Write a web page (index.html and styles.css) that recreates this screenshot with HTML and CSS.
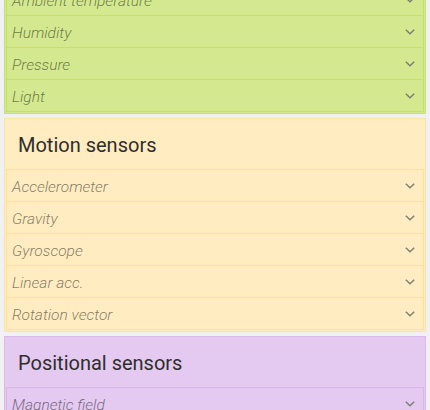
FILE: index.html
```html
<!DOCTYPE html>
<html>
<head>
<meta charset="utf-8">
<link rel="stylesheet" href="styles.css">
</head>
<body>
<main class="list">
  <section class="card card--env">
    <ul class="rows">
      <li class="row"><span>Ambient temperature</span><svg class="chev" viewBox="0 0 10 6"><path d="M0.8 0.8 L5 4.8 L9.2 0.8"/></svg></li>
      <li class="row"><span>Humidity</span><svg class="chev" viewBox="0 0 10 6"><path d="M0.8 0.8 L5 4.8 L9.2 0.8"/></svg></li>
      <li class="row"><span>Pressure</span><svg class="chev" viewBox="0 0 10 6"><path d="M0.8 0.8 L5 4.8 L9.2 0.8"/></svg></li>
      <li class="row"><span>Light</span><svg class="chev" viewBox="0 0 10 6"><path d="M0.8 0.8 L5 4.8 L9.2 0.8"/></svg></li>
    </ul>
  </section>
  <section class="card card--motion">
    <h2 class="card__title">Motion sensors</h2>
    <ul class="rows">
      <li class="row"><span>Accelerometer</span><svg class="chev" viewBox="0 0 10 6"><path d="M0.8 0.8 L5 4.8 L9.2 0.8"/></svg></li>
      <li class="row"><span>Gravity</span><svg class="chev" viewBox="0 0 10 6"><path d="M0.8 0.8 L5 4.8 L9.2 0.8"/></svg></li>
      <li class="row"><span>Gyroscope</span><svg class="chev" viewBox="0 0 10 6"><path d="M0.8 0.8 L5 4.8 L9.2 0.8"/></svg></li>
      <li class="row"><span>Linear acc.</span><svg class="chev" viewBox="0 0 10 6"><path d="M0.8 0.8 L5 4.8 L9.2 0.8"/></svg></li>
      <li class="row"><span>Rotation vector</span><svg class="chev" viewBox="0 0 10 6"><path d="M0.8 0.8 L5 4.8 L9.2 0.8"/></svg></li>
    </ul>
  </section>
  <section class="card card--pos">
    <h2 class="card__title">Positional sensors</h2>
    <ul class="rows">
      <li class="row"><span>Magnetic field</span><svg class="chev" viewBox="0 0 10 6"><path d="M0.8 0.8 L5 4.8 L9.2 0.8"/></svg></li>
    </ul>
  </section>
</main>
</body>
</html>
```

FILE: styles.css
```css
html, body {
  margin: 0;
  padding: 0;
  background: #f1f1f1;
  font-family: Roboto, "Liberation Sans", sans-serif;
  overflow: hidden;
}

.list {
  display: flex;
  flex-direction: column;
  gap: 4px;
  padding: 0 4px;
  margin-top: -18px;
}

.card {
  border: 1px solid;
  padding: 0 1px 1px 1px;
}

.card__title {
  margin: 0;
  height: 50px;
  box-sizing: border-box;
  padding: 2px 0 0 12px;
  display: flex;
  align-items: center;
  font-size: 20px;
  font-weight: 400;
  color: #2e2e2e;
}

.rows {
  list-style: none;
  margin: 0;
  padding: 0;
  border: 1px solid;
  border-bottom: 0;
}

.row {
  height: 31px;
  box-sizing: border-box;
  border-bottom: 1px solid;
  display: flex;
  align-items: center;
  justify-content: space-between;
  padding: 2px 8px 0 5px;
  height: 32px;
  font-size: 15.5px;
  font-style: italic;
  font-weight: 300;
  color: rgba(0, 0, 0, 0.5);
}

.chev {
  width: 10px;
  height: 6px;
  margin-top: -2px;
  fill: none;
  stroke: #7d7d72;
  stroke-width: 1.4;
}

.card--env { background: #d4e98f; border-color: #c6e07a; }
.card--env .rows, .card--env .row { border-color: #c5df6f; }

.card--motion { background: #ffecc0; border-color: #fde2a6; }
.card--motion .rows, .card--motion .row { border-color: #fde0a0; }

.card--pos { background: #e4c9f0; border-color: #dbb9ea; }
.card--pos .rows, .card--pos .row { border-color: #d9b6e8; }
```
